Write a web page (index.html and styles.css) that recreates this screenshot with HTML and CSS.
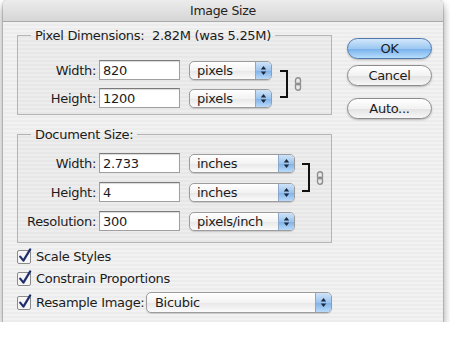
FILE: index.html
```html
<!DOCTYPE html>
<html lang="en">
<head>
    <meta charset="UTF-8">
    <title>Image Size</title>
    <link rel="stylesheet" href="styles.css">
</head>
<body>
    <div class="window">
        <div class="titlebar">Image Size</div>
        <div class="content">
            <div class="main">
                <fieldset class="group group-pixels">
                    <legend>Pixel Dimensions:&nbsp; 2.82M (was 5.25M)</legend>
                    <div class="linked">
                        <div class="rows">
                            <div class="row">
                                <label>Width:</label>
                                <input type="text" value="820">
                                <div class="popup popup-short">pixels<span class="arrows"><svg width="7" height="11" viewBox="0 0 7 11"><path d="M3.5 1L6.2 4.6H0.8Z M3.5 10L6.2 6.4H0.8Z"/></svg></span></div>
                            </div>
                            <div class="row">
                                <label>Height:</label>
                                <input type="text" value="1200">
                                <div class="popup popup-short">pixels<span class="arrows"><svg width="7" height="11" viewBox="0 0 7 11"><path d="M3.5 1L6.2 4.6H0.8Z M3.5 10L6.2 6.4H0.8Z"/></svg></span></div>
                            </div>
                        </div>
                        <span class="bracket"></span>
                        <svg class="chain" width="8" height="14" viewBox="0 0 8 14"><rect x="1.5" y="0.8" width="5" height="7" rx="2.5"/><rect x="1.5" y="6.2" width="5" height="7" rx="2.5"/></svg>
                    </div>
                </fieldset>

                <fieldset class="group group-doc">
                    <legend>Document Size:</legend>
                    <div class="linked">
                        <div class="rows">
                            <div class="row">
                                <label>Width:</label>
                                <input type="text" value="2.733">
                                <div class="popup popup-wide">inches<span class="arrows"><svg width="7" height="11" viewBox="0 0 7 11"><path d="M3.5 1L6.2 4.6H0.8Z M3.5 10L6.2 6.4H0.8Z"/></svg></span></div>
                            </div>
                            <div class="row">
                                <label>Height:</label>
                                <input type="text" value="4">
                                <div class="popup popup-wide">inches<span class="arrows"><svg width="7" height="11" viewBox="0 0 7 11"><path d="M3.5 1L6.2 4.6H0.8Z M3.5 10L6.2 6.4H0.8Z"/></svg></span></div>
                            </div>
                        </div>
                        <span class="bracket bracket-doc"></span>
                        <svg class="chain" width="8" height="14" viewBox="0 0 8 14"><rect x="1.5" y="0.8" width="5" height="7" rx="2.5"/><rect x="1.5" y="6.2" width="5" height="7" rx="2.5"/></svg>
                    </div>
                    <div class="row row-res">
                        <label>Resolution:</label>
                        <input type="text" value="300">
                        <div class="popup popup-wide">pixels/inch<span class="arrows"><svg width="7" height="11" viewBox="0 0 7 11"><path d="M3.5 1L6.2 4.6H0.8Z M3.5 10L6.2 6.4H0.8Z"/></svg></span></div>
                    </div>
                </fieldset>

                <div class="checks">
                    <div class="check">
                        <svg class="box" width="16" height="16" viewBox="0 0 16 16"><rect x="0.5" y="2.5" width="13" height="13" rx="1.5"/><path d="M3.2 8.6L6.4 12.6L13.2 1.4"/></svg>
                        <span>Scale Styles</span>
                    </div>
                    <div class="check">
                        <svg class="box" width="16" height="16" viewBox="0 0 16 16"><rect x="0.5" y="2.5" width="13" height="13" rx="1.5"/><path d="M3.2 8.6L6.4 12.6L13.2 1.4"/></svg>
                        <span>Constrain Proportions</span>
                    </div>
                    <div class="check check-resample">
                        <svg class="box" width="16" height="16" viewBox="0 0 16 16"><rect x="0.5" y="2.5" width="13" height="13" rx="1.5"/><path d="M3.2 8.6L6.4 12.6L13.2 1.4"/></svg>
                        <span>Resample Image:</span>
                        <div class="popup popup-method">Bicubic<span class="arrows"><svg width="7" height="11" viewBox="0 0 7 11"><path d="M3.5 1L6.2 4.6H0.8Z M3.5 10L6.2 6.4H0.8Z"/></svg></span></div>
                    </div>
                </div>
            </div>

            <div class="side">
                <button class="btn btn-default">OK</button>
                <button class="btn">Cancel</button>
                <button class="btn btn-auto">Auto...</button>
            </div>
        </div>
    </div>
</body>
</html>
```

FILE: styles.css
```css
body {
    margin: 0;
    background: #fff;
    font-family: "DejaVu Sans", sans-serif;
    font-size: 13px;
    letter-spacing: -0.3px;
    color: #1c1c1c;
}
.window {
    width: 440px;
    margin-left: 3px;
    border-radius: 5px 5px 0 0;
    background: repeating-linear-gradient(to bottom, #ececec 0, #ececec 2px, #f2f2f2 2px, #f2f2f2 4px);
    box-shadow: 0 5px 10px rgba(0, 0, 0, 0.45), 0 0 0 1px rgba(0, 0, 0, 0.12);
}
.titlebar {
    height: 21px;
    line-height: 22px;
    text-align: center;
    font-size: 12.5px;
    color: #222;
    background: linear-gradient(#ececec, #d6d6d6);
    border-bottom: 1px solid #a9a9a9;
    border-radius: 5px 5px 0 0;
}
.content {
    display: flex;
    gap: 15px;
    padding: 6px 11px 9px 14px;
}
.main {
    width: 315px;
    flex-shrink: 0;
}
.group {
    margin: 0;
    padding: 0;
    border: 1px solid #b4b4b4;
    background: rgba(0, 0, 0, 0.02);
}
.group legend {
    margin-left: 13px;
    padding: 0 4px;
    line-height: 15px;
}
.group-pixels {
    padding: 17px 0 6px;
}
.group-doc {
    margin-top: 12px;
    padding: 11px 0 11px;
}
.linked {
    display: flex;
}
.rows {
    display: flex;
    flex-direction: column;
    gap: 8px;
}
.group-doc .rows {
    gap: 9px;
}
.row {
    display: flex;
    align-items: center;
    height: 20px;
}
.row-res {
    margin-top: 9px;
}
.row label {
    width: 78px;
    text-align: right;
    margin-right: 3px;
}
.row input {
    box-sizing: border-box;
    width: 81px;
    height: 20px;
    margin: 0 9px 0 0;
    padding: 0 3px;
    font-family: inherit;
    font-size: 13px;
    letter-spacing: -0.3px;
    color: #1c1c1c;
    border: 1px solid #a0a0a0;
    border-top-color: #7a7a7a;
    box-shadow: inset 0 1px 1px rgba(0, 0, 0, 0.15);
    background: #fff;
    outline: none;
}
.popup {
    box-sizing: border-box;
    display: flex;
    align-items: center;
    height: 19px;
    padding-left: 7px;
    border: 1px solid #9c9c9c;
    border-radius: 5px;
    background: linear-gradient(#ffffff, #f3f3f3 50%, #e7e7e7 51%, #fbfbfb);
    box-shadow: 0 1px 1px rgba(0, 0, 0, 0.15);
    white-space: nowrap;
}
.popup-short {
    width: 83px;
}
.popup-wide {
    width: 106px;
}
.popup-method {
    width: 186px;
    height: 21px;
    margin-left: auto;
    padding-left: 8px;
    flex-shrink: 0;
}
.arrows {
    display: flex;
    align-items: center;
    justify-content: center;
    align-self: stretch;
    width: 15px;
    margin-left: auto;
    border-left: 1px solid #8aa8cc;
    border-radius: 0 4px 4px 0;
    background: linear-gradient(#cfe3f8, #9cc4ee 50%, #7eb0e6 51%, #b9dafa);
}
.arrows path {
    fill: #1d2a3c;
}
.bracket {
    box-sizing: border-box;
    width: 8px;
    margin: 10px 0 10px 8px;
    border: 2px solid #111;
    border-left: none;
}
.bracket-doc {
    margin-left: 7px;
}
.chain {
    align-self: center;
    margin-left: 6px;
}
.chain rect {
    fill: none;
    stroke: #8e8e8e;
    stroke-width: 1.4;
}
.checks {
    display: flex;
    flex-direction: column;
    gap: 2px;
    margin-top: 3px;
}
.check {
    display: flex;
    align-items: center;
    height: 20px;
    white-space: nowrap;
}
.check-resample {
    height: 22px;
    margin-top: 1px;
}
.box {
    margin-right: 3px;
    flex-shrink: 0;
}
.box rect {
    fill: #f6f6f6;
    stroke: #8a8a8a;
}
.box path {
    fill: none;
    stroke: #1f2f6a;
    stroke-width: 2.2;
    stroke-linecap: round;
    stroke-linejoin: round;
}
.side {
    display: flex;
    flex-direction: column;
    width: 85px;
    padding-top: 10px;
}
.btn {
    height: 21px;
    padding: 0;
    font-family: inherit;
    font-size: 13px;
    letter-spacing: -0.3px;
    color: #1c1c1c;
    border: 1px solid #8c8c8c;
    border-radius: 11px;
    background: linear-gradient(#ffffff, #f2f2f2 50%, #e2e2e2 51%, #f7f7f7);
    box-shadow: 0 1px 2px rgba(0, 0, 0, 0.25);
}
.btn + .btn {
    margin-top: 6px;
}
.btn-default {
    border-color: #4f77aa;
    background: linear-gradient(#d3e7fb, #9cc8f1 50%, #76afeb 51%, #b7defc);
}
.btn.btn-auto {
    margin-top: 12px;
}
```
